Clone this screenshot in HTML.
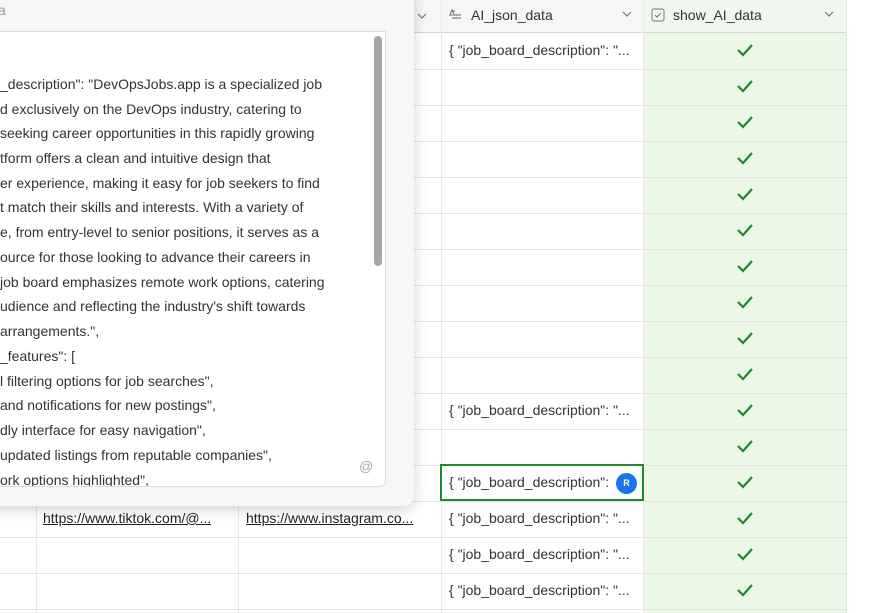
<!DOCTYPE html>
<html><head><style>
body{margin:0;width:885px;height:613px;overflow:hidden;background:#fff;font-family:"Liberation Sans",sans-serif;position:relative;color:#333}
.abs{position:absolute}
.hl{position:absolute;left:0;width:846px;height:1px;background:#e4e4e4}
.vl{position:absolute;top:0;width:1px;height:613px;background:#e8e8e8}
.cell{position:absolute;font-size:14px;white-space:nowrap}
.chk{position:absolute;left:736px}
.pl{position:absolute;left:0;font-size:14px;white-space:nowrap;color:#333}
</style></head><body>
<div class="abs" style="left:643px;top:0;width:203px;height:613px;background:#ebf8e6"></div>
<div class="abs" style="left:0;top:0;width:846px;height:32px;background:#f6f6f6"></div>
<div class="abs" style="left:643px;top:0;width:203px;height:32px;background:#f1f6ee"></div>
<div class="abs" style="left:0;top:32px;width:846px;height:1px;background:#d6d6d6"></div>
<div class="vl" style="left:36px"></div><div class="vl" style="left:238px"></div><div class="vl" style="left:441px"></div><div class="vl" style="left:643px"></div><div class="vl" style="left:846px;background:#e2e2e2"></div>
<div class="hl" style="top:69px"></div><div class="hl" style="top:105px"></div><div class="hl" style="top:141px"></div><div class="hl" style="top:177px"></div><div class="hl" style="top:213px"></div><div class="hl" style="top:249px"></div><div class="hl" style="top:285px"></div><div class="hl" style="top:321px"></div><div class="hl" style="top:357px"></div><div class="hl" style="top:393px"></div><div class="hl" style="top:429px"></div><div class="hl" style="top:465px"></div><div class="hl" style="top:501px"></div><div class="hl" style="top:537px"></div><div class="hl" style="top:573px"></div><div class="hl" style="top:609px"></div>
<!-- header -->
<svg class="abs" style="left:415px;top:9px" width="14" height="14"><path d="M3 5l4 4 4-4" fill="none" stroke="#777" stroke-width="1.2"/></svg>
<svg class="abs" style="left:448px;top:8px" width="14" height="14"><path d="M4 3h3M1 7h12M4 10h9M2 6l2-4 2 4" fill="none" stroke="#666" stroke-width="1"/></svg>
<div class="cell" style="left:471px;top:7px;font-size:14px">AI_json_data</div>
<svg class="abs" style="left:620px;top:7px" width="14" height="14"><path d="M3 5l4 4 4-4" fill="none" stroke="#777" stroke-width="1.2"/></svg>
<svg class="abs" style="left:651px;top:8px" width="14" height="14"><rect x="1" y="1" width="12" height="12" rx="2" fill="none" stroke="#777"/><path d="M4 7l2 2 4-4" fill="none" stroke="#777"/></svg>
<div class="cell" style="left:673px;top:7px;font-size:14px">show_AI_data</div>
<svg class="abs" style="left:822px;top:7px" width="14" height="14"><path d="M3 5l4 4 4-4" fill="none" stroke="#777" stroke-width="1.2"/></svg>
<!-- cells -->
<div class="cell" style="left:449px;top:42px">{ "job_board_description": "...</div>
<div class="cell" style="left:449px;top:402px">{ "job_board_description": "...</div>
<div class="cell" style="left:449px;top:510px">{ "job_board_description": "...</div>
<div class="cell" style="left:449px;top:546px">{ "job_board_description": "...</div>
<div class="cell" style="left:449px;top:582px">{ "job_board_description": "...</div>
<div class="cell" style="left:43px;top:510px;text-decoration:underline;color:#222">https://www.tiktok.com/@...</div>
<div class="cell" style="left:246px;top:510px;text-decoration:underline;color:#222">https://www.instagram.co...</div>
<div class="abs" style="left:440px;top:464px;width:204px;height:37px;border:2px solid #1e8a2c;box-sizing:border-box;background:#fff"></div>
<div class="cell" style="left:449px;top:474px">{ "job_board_description":</div>
<div class="abs" style="left:616px;top:473px;width:21px;height:21px;border-radius:50%;background:#1a73e8;color:#fff;font-size:9px;font-weight:bold;text-align:center;line-height:21px">R</div>
<!-- checks -->
<svg width="0" height="0" style="position:absolute"><defs><path id="c" d="M2 8l5 5 9-10" fill="none" stroke="#1e8a2c" stroke-width="2.2"/></defs></svg>
<svg class="chk" style="top:42px" width="18" height="16"><use href="#c"/></svg>
<svg class="chk" style="top:78px" width="18" height="16"><use href="#c"/></svg>
<svg class="chk" style="top:114px" width="18" height="16"><use href="#c"/></svg>
<svg class="chk" style="top:150px" width="18" height="16"><use href="#c"/></svg>
<svg class="chk" style="top:186px" width="18" height="16"><use href="#c"/></svg>
<svg class="chk" style="top:222px" width="18" height="16"><use href="#c"/></svg>
<svg class="chk" style="top:258px" width="18" height="16"><use href="#c"/></svg>
<svg class="chk" style="top:294px" width="18" height="16"><use href="#c"/></svg>
<svg class="chk" style="top:330px" width="18" height="16"><use href="#c"/></svg>
<svg class="chk" style="top:366px" width="18" height="16"><use href="#c"/></svg>
<svg class="chk" style="top:402px" width="18" height="16"><use href="#c"/></svg>
<svg class="chk" style="top:438px" width="18" height="16"><use href="#c"/></svg>
<svg class="chk" style="top:474px" width="18" height="16"><use href="#c"/></svg>
<svg class="chk" style="top:510px" width="18" height="16"><use href="#c"/></svg>
<svg class="chk" style="top:546px" width="18" height="16"><use href="#c"/></svg>
<svg class="chk" style="top:582px" width="18" height="16"><use href="#c"/></svg>
<!-- popup -->
<div class="abs" style="left:-20px;top:-10px;width:434px;height:516px;background:#f7f7f7;border-radius:0 0 10px 0;box-shadow:0 4px 14px rgba(0,0,0,0.18)"></div>
<div class="cell" style="left:-2px;top:2px;color:#999;font-size:14px">a</div>
<div class="abs" style="left:-20px;top:31px;width:406px;height:456px;background:#fff;border:1px solid #ddd;border-radius:0 0 6px 0;box-sizing:border-box"></div>
<div class="abs" style="left:374px;top:36px;width:8px;height:230px;background:#a6a6a6;border-radius:4px"></div>
<div style="position:absolute;left:0;top:0;width:370px;height:486px;overflow:hidden">
<div class="pl" style="top:76px">_description": "DevOpsJobs.app is a specialized job</div>
<div class="pl" style="top:101px">d exclusively on the DevOps industry, catering to</div>
<div class="pl" style="top:125px">seeking career opportunities in this rapidly growing</div>
<div class="pl" style="top:150px">tform offers a clean and intuitive design that</div>
<div class="pl" style="top:175px">er experience, making it easy for job seekers to find</div>
<div class="pl" style="top:199px">t match their skills and interests. With a variety of</div>
<div class="pl" style="top:224px">e, from entry-level to senior positions, it serves as a</div>
<div class="pl" style="top:249px">ource for those looking to advance their careers in</div>
<div class="pl" style="top:274px">job board emphasizes remote work options, catering</div>
<div class="pl" style="top:298px">udience and reflecting the industry's shift towards</div>
<div class="pl" style="top:323px">arrangements.",</div>
<div class="pl" style="top:348px">_features": [</div>
<div class="pl" style="top:373px">l filtering options for job searches",</div>
<div class="pl" style="top:397px">and notifications for new postings",</div>
<div class="pl" style="top:422px">dly interface for easy navigation",</div>
<div class="pl" style="top:447px">updated listings from reputable companies",</div>
<div class="pl" style="top:472px">ork options highlighted",</div>
</div>
<div class="cell" style="left:359px;top:458px;color:#aaa;font-size:14px">@</div>
</body></html>
